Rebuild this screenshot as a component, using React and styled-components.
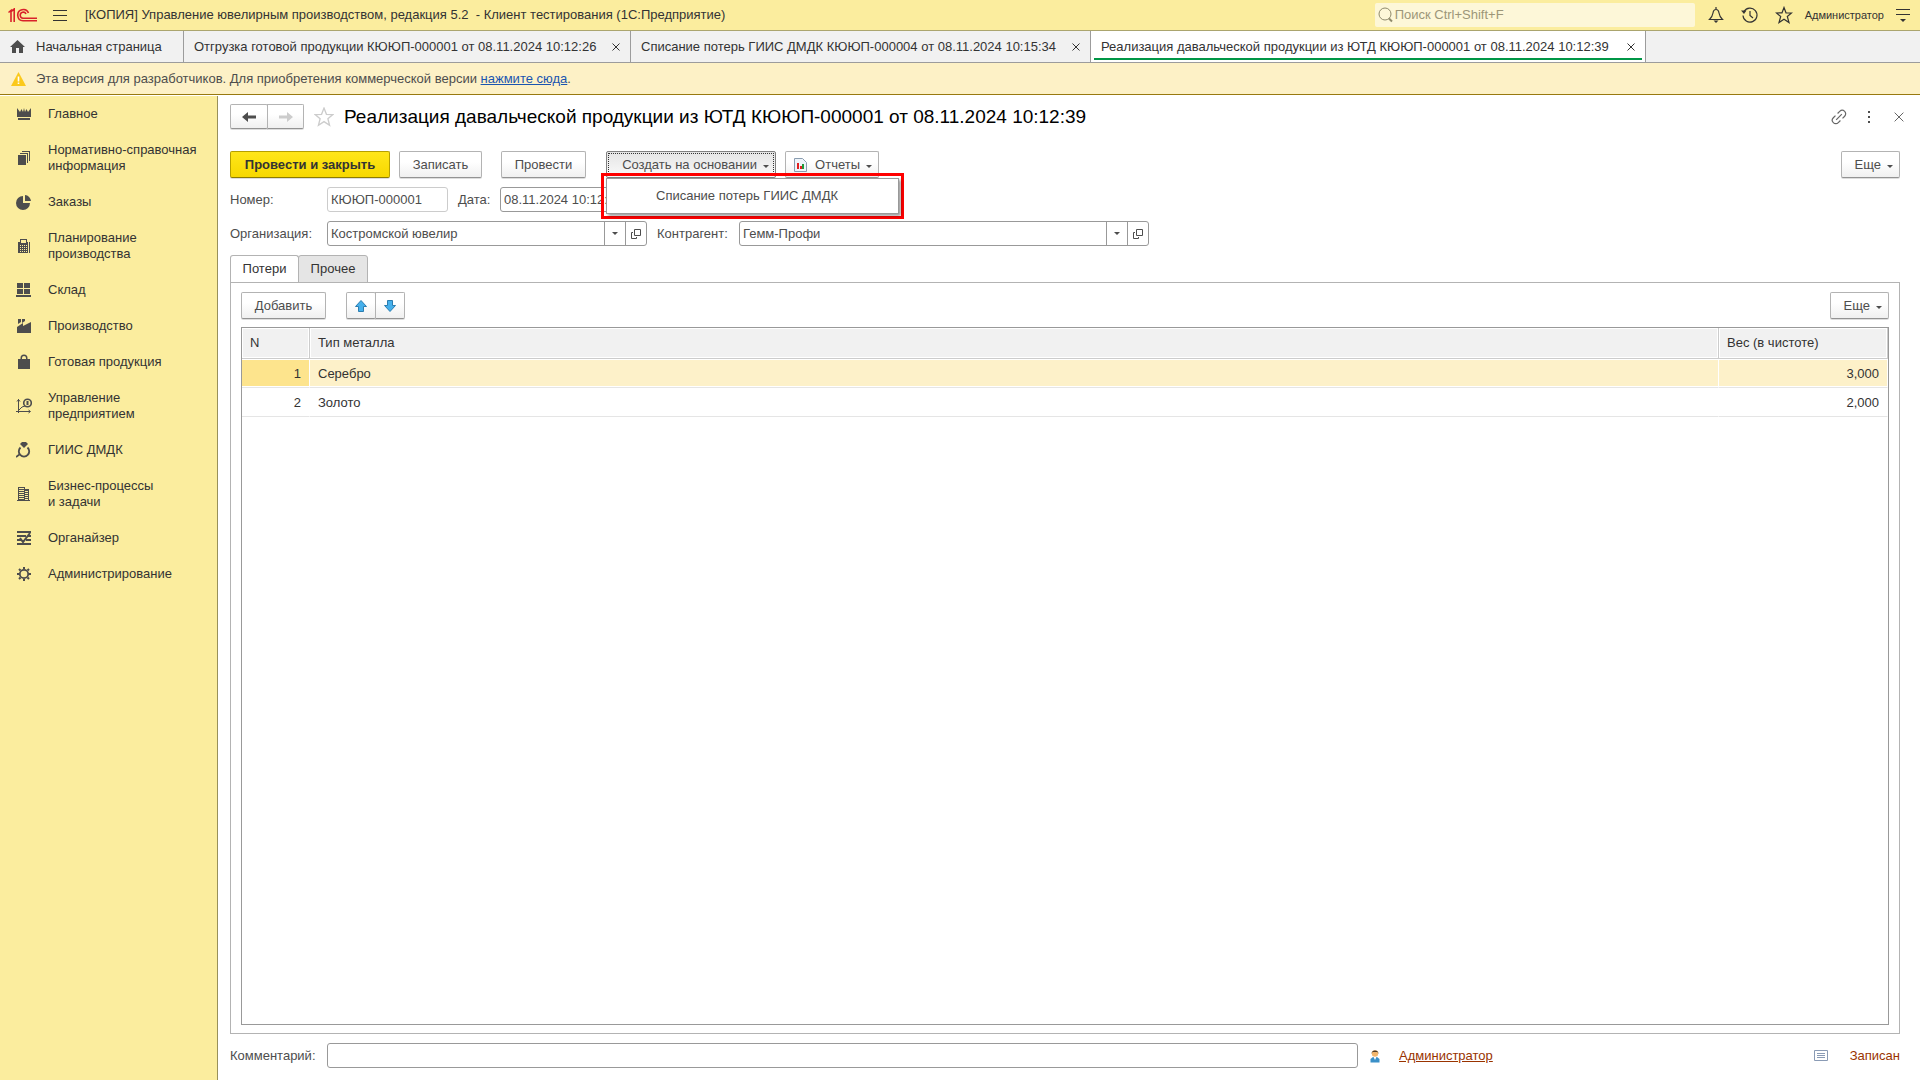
import styled, { createGlobalStyle, css } from 'styled-components';

const GlobalStyle = createGlobalStyle`
  * {
    box-sizing: border-box;
  }

  html, body, #root {
    height: 100%;
    margin: 0;
  }

  body, button, input {
    font-family: "Liberation Sans", Arial, sans-serif;
    font-size: 13px;
    line-height: 16px;
    color: #333;
  }
`;

const Page = styled.div`
  display: flex;
  flex-direction: column;
  min-height: 100%;
  background: #fff;
`;

const TitleBar = styled.header`
  display: flex;
  align-items: center;
  height: 31px;
  padding-left: 8px;
  background: #fbed9e;
  border-bottom: 1px solid #aba56e;
`;

const AppTitle = styled.div`
  flex: 1;
  padding-left: 2px;
  white-space: pre;
`;

const IconButton = styled.button`
  display: flex;
  flex: none;
  align-items: center;
  justify-content: center;
  width: ${props => props.$width || 34}px;
  height: 24px;
  padding: 0;
  border: 0;
  background: none;
  color: ${props => props.$color || '#333'};
`;

const Search = styled.label`
  display: flex;
  align-items: center;
  gap: 2px;
  width: 320px;
  height: 24px;
  margin: 0 4px 0 0;
  padding: 0 3px;
  background: #fdf7d8;
  border-radius: 2px;
`;

const SearchInput = styled.input`
  flex: 1;
  min-width: 0;
  padding: 0;
  border: 0;
  outline: 0;
  background: none;

  &::placeholder {
    color: #9c9678;
    opacity: 1;
  }
`;

const UserButton = styled.button`
  padding: 0 2px 0 4px;
  border: 0;
  background: none;
  font-size: 11px;
`;

const TabBar = styled.nav`
  display: flex;
  height: 32px;
  background: #f1f1f1;
  border-bottom: 1px solid #9c9c9c;
`;

const WindowTab = styled.div`
  display: flex;
  align-items: center;
  justify-content: space-between;
  width: ${props => props.$width}px;
  padding: 0 3px 0 10px;
  border-right: 1px solid #9c9c9c;
  background: ${props => props.$active ? '#fff' : 'none'};
  white-space: nowrap;
  ${props => props.$active && css`
    box-shadow: inset 0 -2px #fff, inset 3px 0 #fff, inset -3px 0 #fff, inset 0 -4px #009646;
  `}
`;

const TabLink = styled.button`
  display: flex;
  align-items: center;
  gap: 11px;
  padding: 0;
  border: 0;
  background: none;
`;

const Notice = styled.div`
  display: flex;
  align-items: center;
  gap: 10px;
  height: 32px;
  padding: 0 11px;
  background: #fdf1c6;
  border-bottom: 1px solid #98790f;
  color: #4d4d4d;

  a {
    color: #1a55b0;
  }
`;

const Body = styled.div`
  display: flex;
  flex: 1;
  padding-top: 1px;
`;

const Sidebar = styled.nav`
  flex: none;
  width: 218px;
  background: #fbed9e;
  border-right: 1px solid #98905a;
`;

const Section = styled.a`
  display: flex;
  align-items: center;
  gap: 16px;
  padding: 10px 0 10px 16px;
  color: #333;
  text-decoration: none;
  white-space: pre-line;
`;

const Main = styled.main`
  display: flex;
  flex: 1;
  flex-direction: column;
  min-width: 0;
  padding: 8px 20px 12px 12px;
`;

const FormHeader = styled.div`
  display: flex;
  align-items: center;
  height: 25px;
  margin: 0 -14px 22px 0;
`;

const FormTitle = styled.h1`
  flex: 1;
  margin: 0;
  color: #000;
  font-size: 19px;
  font-weight: 400;
  line-height: 24px;
`;

const Toolbar = styled.div`
  display: flex;
  align-items: center;
  height: 27px;
`;

const ButtonGroup = styled.div`
  display: flex;

  button + button {
    margin-left: -1px;
    border-top-left-radius: 0;
    border-bottom-left-radius: 0;
  }
`;

const Button = styled.button`
  display: flex;
  align-items: center;
  justify-content: ${props => props.$menu ? 'flex-end' : 'center'};
  gap: 6px;
  width: ${props => props.$width}px;
  height: ${props => props.$height || 27}px;
  margin-right: ${props => props.$after || 0}px;
  padding: 0 ${props => props.$menu ? 6 : 0}px 0 0;
  border: 1px solid #b3b3b3;
  border-bottom-color: #939393;
  border-radius: 2px;
  background: linear-gradient(#fff 40%, #f0f0f0);
  box-shadow: 0 1px #00000022;
  color: ${props => props.$muted ? '#ccc' : '#4d4d4d'};
  white-space: nowrap;

  ${props => props.$primary && css`
    border-color: #b59f00;
    border-bottom-color: #8d7c00;
    background: linear-gradient(#ffe61a, #f7d800);
    color: #333;
    font-weight: 700;
  `}

  ${props => props.$pressed && css`
    border-color: #808080;
    background: linear-gradient(#e4e4e4, #fafafa);
    outline: 1px dotted #333;
    outline-offset: -3px;
  `}
`;

const Spacer = styled.div`
  flex: 1;
`;

const Caret = styled.i`
  width: 0;
  margin-top: 3px;
  border: 3px solid transparent;
  border-top-color: currentColor;
  border-bottom: 0;
`;

const MenuAnchor = styled.div`
  position: relative;
`;

/* dropped menu with the red frame around it */
const MenuFrame = styled.div`
  position: absolute;
  z-index: 1;
  top: 22px;
  left: -5px;
  width: 303px;
  padding: 2px;
  border: 3px solid #f00;
`;

const Menu = styled.div`
  padding: 9px 0 9px 49px;
  border: 1px solid #999;
  background: #fff;
  box-shadow: 2px 2px 3px #00000066;
`;

const MenuItem = styled.button`
  display: block;
  padding: 0;
  border: 0;
  background: none;
  color: #4d4d4d;
`;

const FieldRow = styled.div`
  display: flex;
  align-items: center;
  margin-top: 9px;
  color: #4d4d4d;
`;

const Label = styled.label`
  flex: none;
  width: ${props => props.$width}px;
  color: #4d4d4d;
`;

const Field = styled.div`
  display: flex;
  flex: ${props => props.$grow ? '1' : 'none'};
  width: ${props => props.$width ? `${props.$width}px` : 'auto'};
  height: 25px;
  margin-right: 10px;
  border: 1px solid ${props => props.$light ? '#ccc' : '#999'};
  border-radius: 3px;
  background: #fff;
`;

const FieldInput = styled.input`
  flex: 1;
  min-width: 0;
  padding: 0 3px;
  border: 0;
  outline: 0;
  background: none;
  color: #4d4d4d;
`;

const FieldButton = styled.button`
  display: flex;
  align-items: center;
  justify-content: center;
  width: 21px;
  padding: 0;
  border: 0;
  border-left: 1px solid #999;
  background: none;
  color: #4d4d4d;

  ${Caret} {
    margin-top: 0;
  }
`;

const PageTabs = styled.div`
  display: flex;
  height: 28px;
  margin: 9px 0 -1px;
`;

const PageTab = styled.button`
  width: ${props => props.$active ? 69 : 70}px;
  margin-right: -1px;
  padding: 0;
  border: 1px solid #b3b3b3;
  border-bottom-color: ${props => props.$active ? '#fff' : '#b3b3b3'};
  border-radius: 3px 3px 0 0;
  background: ${props => props.$active ? '#fff' : '#e5e5e5'};
`;

const Panel = styled.section`
  display: flex;
  flex: 1;
  flex-direction: column;
  gap: 8px;
  padding: 9px 10px 8px;
  border: 1px solid #b3b3b3;
`;

const Grid = styled.div`
  flex: 1;
  border: 1px solid #999;
`;

const Table = styled.table`
  width: 100%;
  table-layout: fixed;
  border-collapse: separate;
  border-spacing: 0;
`;

const HeadCell = styled.th`
  width: ${props => props.$width ? `${props.$width}px` : 'auto'};
  height: 31px;
  padding: 0 8px;
  border-right: 1px solid #ccc;
  border-bottom: 1px solid #ccc;
  background: #f1f1f1;
  box-shadow: inset 0 0 0 1px #fff;
  font-weight: 400;
  text-align: left;
`;

const Cell = styled.td`
  height: 29px;
  padding: 2px 8px 0;
  border-right: 1px solid #fff;
  border-bottom: 1px solid #e5e5e5;
  box-shadow: inset 0 1px #fff, inset 0 -1px #fff;
  text-align: ${props => props.$right ? 'right' : 'left'};
  background: ${props => props.$current ? '#fde48d' : props.$selected ? '#fdf1c9' : '#fff'};
`;

const Footer = styled.div`
  display: flex;
  align-items: center;
  margin-top: 9px;
`;

const FooterInfo = styled.div`
  display: flex;
  flex: none;
  align-items: center;
  width: 532px;
  color: #993300;

  a {
    margin-left: 17px;
    color: #993300;
  }
`;

const State = styled.span`
  margin-left: 22px;
`;

function Logo() {
  return <svg width="29" height="14" viewBox="0 0 29 14" fill="none" stroke="#d9222a" strokeWidth="1.6">
    <path d="M.5 4.500 3 2.500V14M3 3.500 6.200 1V14" />
    <path d="M20.500 5A5.600 5.600 0 1 0 15 12.800h14M18 6a3 3 0 1 0-3 4.200h14" />
  </svg>;
}

function Close({ size = 8 }) {
  return <svg width={ size } height={ size } viewBox="0 0 8 8" stroke="currentColor" strokeWidth={ 8 / size } fill="none">
    <path d="M.5.5l7 7M7.5.5l-7 7" />
  </svg>;
}

function Line({ children, size = 18 }) {
  return <svg width={ size } height={ size } viewBox="0 0 18 18" fill="none" stroke="currentColor" strokeWidth="1.2">
    { children }
  </svg>;
}

const OpenIcon = () => <svg width="10" height="10" fill="none" stroke="currentColor">
  <path d="M3.5.5h6v6h-6zM2 3.5H.5v6h5V8" />
</svg>;

const BigArrow = ({ muted, flip }) => <svg width="14" height="12" fill={ muted ? '#ccc' : '#4d4d4d' }>
  <path d={ flip ? 'M14 6 8 1v3.5H0v3h8V11z' : 'M0 6l6-5v3.5h8v3H6V11z' } />
</svg>;

const MoveArrow = ({ down }) => <svg width="12" height="12" fill="#45b0ec" stroke="#2b7db0">
  <path d={ down ? 'M3.5.5h5v5h3L6 11.500.5 5.500h3z' : 'M6 .5l5.500 6h-3v5h-5v-5h-3z' } />
</svg>;

const glyphs = {
  crown: <path d="M1 2l3 4 1.500-3L7 6l1-4 1 4 1.500-3L12 6l3-4v9H1zM2 12h12v2H2z" />,
  books: <path d="M2 5h8v10H2zM4 3h8v10h-1V4H4zM6 1h8v10h-1V2H6z" />,
  pie: <path d="M7 2v7h7a7 7 0 1 1-7-7zM9 1a6.500 6.500 0 0 1 6 6H9z" />,
  calc: <path fillRule="evenodd" d="M4 1h7v3h1v11H2V4h2zm1 1v3h5V2zM4 7v1h1V7zm2 0v1h1V7zm2 0v1h1V7zm2 0v1h1V7zM4 9v1h1V9zm2 0v1h1V9zm2 0v1h1V9zm2 0v1h1V9zM4 11v1h1v-1zm2 0v1h1v-1zm2 0v1h1v-1zm2 0v1h1v-1zM4 13v1h1v-1zm2 0v1h1v-1zm2 0v1h1v-1zm2 0v1h1v-1zM13 4h1v11h-1z" />,
  boxes: <path d="M1 1h6v5H1zM8 1h6v5H8zM1 7h6v5H1zM8 7h6v5H8zM0 13h15v2H0z" />,
  factory: <path d="M2 1h3v3l-3 2zM6 1h3v2L6 5zM1 9l6-4v3l8-4v11H1z" />,
  bag: <path fillRule="evenodd" d="M2 5h2.500V4a3.500 3.500 0 0 1 7 0v1H14v10H2zm4 0h4V4a2 2 0 0 0-4 0z" />,
  plan: <g fill="none" stroke="#4d4d4d">
    <path d="M2.500 1v14M0 13.500h14M1 3.500l1.500-2L4 3.500M12.500 12l2 1.500-2 1.500M3 12l3-3 3-1" />
    <circle cx="11.500" cy="5" r="3.800" strokeWidth="1.600" />
    <path d="M10 4h3M10 6h3M11.500 3v4" />
  </g>,
  ring: <g fill="none" stroke="#4d4d4d" strokeWidth="1.800">
    <path d="M4.500 5.500a5.200 5.200 0 1 0 7 0M0 15l4-3" />
    <path fill="#4d4d4d" stroke="none" d="M6 0h4l2 2-4 4-4-4z" />
  </g>,
  building: <path fillRule="evenodd" d="M2 1h7v2h4v11h1v1H1v-1h1zm1 1v1h5V2zm0 2v1h5V4zm0 2v1h5V6zm0 2v1h5V8zm0 2v1h5v-1zm0 2v1h5v-1zM9 5v1h3V5zm0 2v1h3V7zm0 2v1h3V9zm0 2v1h3v-1zm0 2v1h3v-1z" />,
  list: <path fill="none" stroke="#4d4d4d" strokeWidth="2" d="M1 2h14M1 6h9M1 10h5M10 10h5M1 14h14M12 6h3M4 8l3 4 7-9" />,
  gear: <g fill="none" stroke="#4d4d4d">
    <circle cx="8" cy="8" r="4.200" strokeWidth="1.800" />
    <path strokeWidth="2" d="M8 1v2M8 13v2M1 8h2M13 8h2M3 3l1.500 1.500M11.500 11.500 13 13M13 3l-1.500 1.500M3 13l1.500-1.500" />
  </g>,
};

const sections = [
  ['crown', 'Главное'],
  ['books', 'Нормативно-справочная\nинформация'],
  ['pie', 'Заказы'],
  ['calc', 'Планирование\nпроизводства'],
  ['boxes', 'Склад'],
  ['factory', 'Производство'],
  ['bag', 'Готовая продукция'],
  ['plan', 'Управление\nпредприятием'],
  ['ring', 'ГИИС ДМДК'],
  ['building', 'Бизнес-процессы\nи задачи'],
  ['list', 'Органайзер'],
  ['gear', 'Администрирование'],
];

const windows = [
  { title: 'Отгрузка готовой продукции КЮЮП-000001 от 08.11.2024 10:12:26', width: 447 },
  { title: 'Списание потерь ГИИС ДМДК КЮЮП-000004 от 08.11.2024 10:15:34', width: 460 },
  { title: 'Реализация давальческой продукции из ЮТД КЮЮП-000001 от 08.11.2024 10:12:39', width: 555, active: true },
];

const rows = [
  [1, 'Серебро', '3,000'],
  [2, 'Золото', '2,000'],
];

function Header() {
  return <TitleBar>
    <Logo />
    <IconButton $width={ 46 } aria-label="Меню">
      <svg width="14" height="11" stroke="currentColor"><path d="M0 .5h14M0 5.500h14M0 10.500h14" /></svg>
    </IconButton>
    <AppTitle>[КОПИЯ] Управление ювелирным производством, редакция 5.2  - Клиент тестирования (1С:Предприятие)</AppTitle>
    <Search>
      <svg width="15" height="16" fill="none" stroke="#8f8a6c"><circle cx="7" cy="7" r="6" /><path strokeWidth="2" d="M11 11.500l3 3" /></svg>
      <SearchInput placeholder="Поиск Ctrl+Shift+F" aria-label="Поиск" />
    </Search>
    <IconButton aria-label="Уведомления">
      <Line><path d="M2.500 13.500h13c-2.500-2.500-3-3.500-3.500-6.500-.3-2.300-1.200-3.500-3-3.500S6.300 4.700 6 7c-.5 3-1 4-3.500 6.500zM9 3.500V1" /><path fill="currentColor" stroke="none" d="M6.500 14.500h5L9 17z" /></Line>
    </IconButton>
    <IconButton aria-label="История">
      <Line><path d="M3 5.500a7 7 0 1 1-1 4M9 5v4.500l3 2.500" /><path fill="currentColor" stroke="none" d="M0 4.500h5.500L3 8z" /></Line>
    </IconButton>
    <IconButton aria-label="Избранное">
      <Line><path d="M9 1.500l2 5.300 5.500.2-4.200 3.500 1.700 6L9 13.200l-5 3.300 1.700-6L1.500 7l5.500-.2z" /></Line>
    </IconButton>
    <UserButton>Администратор</UserButton>
    <IconButton $width={ 34 } aria-label="Настройки">
      <svg width="14" height="13" stroke="currentColor"><path d="M0 .5h14M0 5.500h14" /><path d="M4 10h6l-3 3z" fill="currentColor" stroke="none" /></svg>
    </IconButton>
  </TitleBar>;
}

function Tabs() {
  return <TabBar>
    <WindowTab $width={ 184 }>
      <TabLink>
        <svg width="15" height="13" fill="#4d4d4d"><path d="M7.500 0 15 7h-2v6H9V8H6v5H2V7H0z" /></svg>
        Начальная страница
      </TabLink>
    </WindowTab>
    { windows.map(({ title, width, active }) => <WindowTab key={ title } $width={ width } $active={ active }>
      <TabLink>{ title }</TabLink>
      <IconButton $width={ 22 } aria-label="Закрыть"><Close /></IconButton>
    </WindowTab>) }
  </TabBar>;
}

function RefField({ id, label, labelWidth, value, width }) {
  return <>
    <Label htmlFor={ id } $width={ labelWidth }>{ label }</Label>
    <Field $width={ width }>
      <FieldInput id={ id } defaultValue={ value } />
      <FieldButton aria-label="Выбрать"><Caret /></FieldButton>
      <FieldButton aria-label="Открыть"><OpenIcon /></FieldButton>
    </Field>
  </>;
}

function Losses() {
  return <Panel>
    <Toolbar>
      <Button $width={ 85 } $after={ 20 }>Добавить</Button>
      <ButtonGroup>
        <Button $width={ 30 } aria-label="Переместить вверх"><MoveArrow /></Button>
        <Button $width={ 30 } aria-label="Переместить вниз"><MoveArrow down /></Button>
      </ButtonGroup>
      <Spacer />
      <Button $menu $width={ 59 }>Еще <Caret /></Button>
    </Toolbar>
    <Grid>
      <Table>
        <thead>
          <tr>
            <HeadCell $width={ 68 }>N</HeadCell>
            <HeadCell>Тип металла</HeadCell>
            <HeadCell $width={ 169 }>Вес (в чистоте)</HeadCell>
          </tr>
        </thead>
        <tbody>
          { rows.map(([n, metal, weight], i) => <tr key={ n }>
            <Cell $right $current={ i === 0 }>{ n }</Cell>
            <Cell $selected={ i === 0 }>{ metal }</Cell>
            <Cell $right $selected={ i === 0 }>{ weight }</Cell>
          </tr>) }
        </tbody>
      </Table>
    </Grid>
  </Panel>;
}

function Document() {
  return <Main>
    <FormHeader>
      <ButtonGroup>
        <Button $width={ 38 } $height={ 25 } aria-label="Назад"><BigArrow /></Button>
        <Button $width={ 37 } $height={ 25 } $muted aria-label="Вперед"><BigArrow muted flip /></Button>
      </ButtonGroup>
      <IconButton $width={ 40 } $color="#ccc" aria-label="В избранное">
        <Line size={ 20 }><path d="M9 1l2.200 5.600 5.800.2-4.500 3.700 1.500 6L9 13.200l-5 3.300 1.500-6L1 6.800l5.800-.2z" /></Line>
      </IconButton>
      <FormTitle>{ windows[2].title }</FormTitle>
      <IconButton $width={ 30 } $color="#666" aria-label="Ссылка">
        <Line>
          <g transform="rotate(-45 9 9)"><path d="M7.500 5.500h-3a3.500 3.500 0 0 0 0 7h3M10.500 5.500h3a3.500 3.500 0 0 1 0 7h-3M5 9h8" /></g>
        </Line>
      </IconButton>
      <IconButton $width={ 30 } $color="#4d4d4d" aria-label="Еще">
        <svg width="2" height="12" fill="currentColor"><path d="M0 0h2v2H0zM0 5h2v2H0zM0 10h2v2H0z" /></svg>
      </IconButton>
      <IconButton $width={ 30 } $color="#666" aria-label="Закрыть"><Close size={ 10 } /></IconButton>
    </FormHeader>

    <Toolbar>
      <Button $primary $width={ 160 } $after={ 9 }>Провести и закрыть</Button>
      <Button $width={ 83 } $after={ 19 }>Записать</Button>
      <Button $width={ 85 } $after={ 20 }>Провести</Button>
      <MenuAnchor>
        <Button $menu $pressed $width={ 170 } $after={ 9 }>Создать на основании <Caret /></Button>
        <MenuFrame>
          <Menu>
            <MenuItem>Списание потерь ГИИС ДМДК</MenuItem>
          </Menu>
        </MenuFrame>
      </MenuAnchor>
      <Button $menu $width={ 94 }>
        <svg width="15" height="14"><path d="M.5.500h8l4 4v9H.5z" fill="#eef4fa" stroke="#8a9db0" /><path d="M3 5h2v6H3z" fill="#e02020" /><path d="M6 8h2v3H6z" fill="#e02020" /><path d="M8 6h2v5H8z" fill="#1f9a3c" /></svg>
        Отчеты <Caret />
      </Button>
      <Spacer />
      <Button $menu $width={ 59 }>Еще <Caret /></Button>
    </Toolbar>

    <FieldRow>
      <Label htmlFor="number" $width={ 97 }>Номер:</Label>
      <Field $light $width={ 121 }><FieldInput id="number" defaultValue="КЮЮП-000001" /></Field>
      <Label htmlFor="date" $width={ 42 }>Дата:</Label>
      <Field $width={ 150 }><FieldInput id="date" defaultValue="08.11.2024 10:12:39" /></Field>
    </FieldRow>
    <FieldRow>
      <RefField id="org" label="Организация:" labelWidth={ 97 } value="Костромской ювелир" width={ 320 } />
      <RefField id="partner" label="Контрагент:" labelWidth={ 82 } value="Гемм-Профи" width={ 410 } />
    </FieldRow>

    <PageTabs>
      <PageTab $active>Потери</PageTab>
      <PageTab>Прочее</PageTab>
    </PageTabs>
    <Losses />

    <Footer>
      <Label htmlFor="comment" $width={ 97 }>Комментарий:</Label>
      <Field $grow><FieldInput id="comment" /></Field>
      <FooterInfo>
        <svg width="14" height="14"><path d="M2.500 13.500V10L5 8h4l2.500 2v3.500z" fill="#3a90c8" /><path d="M5.500 8h3L7 11z" fill="#fff" /><circle cx="7" cy="4.500" r="3.200" fill="#f2b66d" /><path d="M3.500 5a3.500 3.500 0 1 1 7 0L9.500 3h-5z" fill="#4a3b2a" /></svg>
        <a href="#user">Администратор</a>
        <Spacer />
        <svg width="14" height="11" fill="none" stroke="#8a9bb5"><path d="M.5.500h13v10H.5zM3 3.500h8M3 5.500h8M3 7.500h8" /></svg>
        <State>Записан</State>
      </FooterInfo>
    </Footer>
  </Main>;
}

function App() {
  return <Page>
    <GlobalStyle />
    <Header />
    <Tabs />
    <Notice>
      <svg width="15" height="14"><path d="M7.500 0 15 14H0z" fill="#fbc91c" /><path d="M6.700 4.500h1.600v5H6.700zM6.700 10.500h1.600v1.600H6.700z" fill="#fff" /></svg>
      <span>Эта версия для разработчиков. Для приобретения коммерческой версии <a href="#buy">нажмите сюда</a>.</span>
    </Notice>
    <Body>
      <Sidebar>
        { sections.map(([icon, name]) => <Section key={ icon } href={ `#${icon}` }>
          <svg width="16" height="16" fill="#4d4d4d">{ glyphs[icon] }</svg>
          <span>{ name }</span>
        </Section>) }
      </Sidebar>
      <Document />
    </Body>
  </Page>;
}

export default App;
